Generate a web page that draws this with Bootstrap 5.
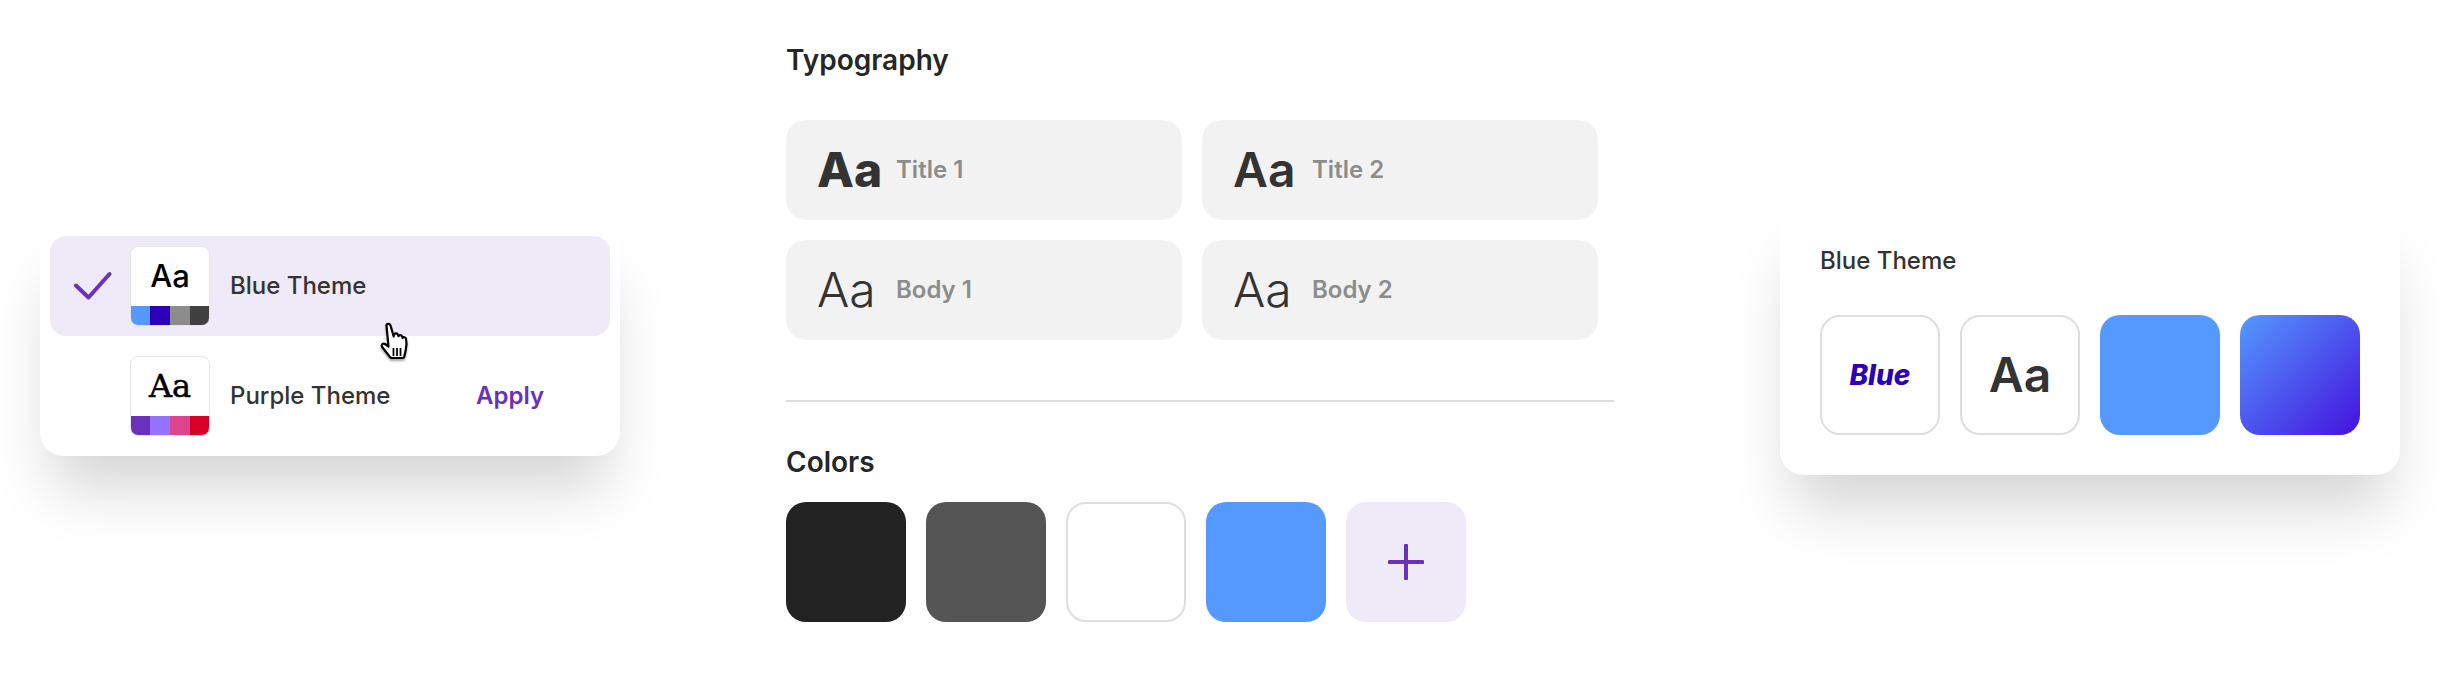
<!DOCTYPE html>
<html lang="en">
<head>
<meta charset="utf-8">
<title>Themes</title>
<link href="https://cdn.jsdelivr.net/npm/bootstrap@5.3.0/dist/css/bootstrap.min.css" rel="stylesheet">
<style>
html,body{height:682px;overflow:hidden;background:#fff}
body{font-family:"Inter","Liberation Sans",sans-serif;color:#333}
.stage{height:682px;padding:0 40px}
.float-card{background:#fff;border-radius:24px;box-shadow:0 44px 60px -12px rgba(0,0,0,.17)}
.picker{width:580px;height:230px;padding:10px}
.pick-row{height:100px;border-radius:16px;padding-left:24px;position:relative}
.pick-row.on{background:#eeeaf8}
.pick-row+.pick-row{height:110px;padding-top:10px}
.check-slot{width:56px;flex:none}
.thumb{width:80px;height:80px;flex:none;border-radius:8px;overflow:hidden;background:#fff;border:1px solid #e6e6e6;display:flex;flex-direction:column}
.thumb-aa{flex:1;display:flex;align-items:center;justify-content:center;font-size:31px;line-height:1;color:#000;font-weight:500;padding-bottom:2px}
.thumb-aa.serif{font-family:"DejaVu Serif","Liberation Serif",serif;font-weight:400;font-size:32px;-webkit-text-stroke:.5px #000}
.strip{height:20px;margin:0 -1px -1px;display:flex;flex:none}
.strip i{flex:1}
.pick-name{font-size:24px;font-weight:550;margin-left:20px;color:#333;line-height:30px}
.apply{font-size:24px;font-weight:600;color:#6931bc;line-height:30px;margin-left:auto;margin-right:66px}
.hand{position:absolute;left:329px;top:86px}
.mid{width:828px;height:682px;padding-top:45px}
.sec-title{font-size:28px;font-weight:600;line-height:30px;color:#262626}
.type-grid{display:grid;grid-template-columns:396px 396px;gap:20px;margin-top:45px}
.type-tile{height:100px;background:#f2f2f2;border-radius:20px;padding-left:31px}
.type-aa{font-size:48px;line-height:1;color:#333;width:79px;flex:none}
.w8{font-weight:800}.w6{font-weight:600}.w3{font-weight:300}
.type-lab{font-size:24px;font-weight:600;color:#8c8c8c;line-height:30px}
.rule{height:2px;background:#dedede;margin:60px 0 45px;opacity:1;border:0}
.swatches{gap:20px;margin-top:25px}
.swatch{width:120px;height:120px;border-radius:20px;flex:none}
.s-dark{background:#222}.s-grey{background:#555}.s-white{background:#fff;border:2px solid #dedede}.s-blue{background:#5599ff}.s-add{background:#eeeaf8}
.theme{width:620px;height:268px;padding:39px 40px 40px}
.theme-title{font-size:24px;font-weight:550;line-height:30px;margin-bottom:39px;color:#333}
.tile-row{gap:20px}
.tile-aa{font-size:48px;font-weight:600;color:#333}
.tile-blue{font-size:28px;font-weight:800;font-style:italic;color:#2b00b8}
.s-grad{background:linear-gradient(135deg,#5599ff,#4411dd)}
</style>
</head>
<body>
<main class="stage d-flex justify-content-between align-items-center">
  <section class="float-card picker">
    <div class="pick-row on d-flex align-items-center">
      <div class="check-slot">
        <svg width="38" height="30" viewBox="0 0 38 30" fill="none"><path d="M2 14.5 14.5 26.5 35.5 3" stroke="#6931bc" stroke-width="4" stroke-linecap="round" stroke-linejoin="round"/></svg>
      </div>
      <div class="thumb">
        <div class="thumb-aa">Aa</div>
        <div class="strip"><i style="background:#5599ff"></i><i style="background:#2b00b8"></i><i style="background:#8c8c8c"></i><i style="background:#404040"></i></div>
      </div>
      <div class="pick-name">Blue Theme</div>
      <svg class="hand" width="34" height="42" viewBox="0 0 34 42">
        <defs><filter id="hs" x="-30%" y="-30%" width="160%" height="160%"><feDropShadow dx="0" dy="2" stdDeviation="1.2" flood-color="#000" flood-opacity=".35"/></filter></defs>
        <path filter="url(#hs)" d="M7.5 3.5c0-2 3.3-2.4 4 0l3.2 11 .6-2c.5-1.7 3-1.6 3.600.2l.6 1.500c.5-1.500 3-1.500 3.600.2l.5 1.600c.7-1.300 3-1 3.400.8.8 3.500.6 7.600-.3 11.200l-1.400 6.500c-.2 1-1 1.500-2 1.500H13c-.9 0-1.600-.4-2.100-1.100L3 24.800c-1.300-2 1-4 3-2.800l3.500 2.500z" fill="#fff" stroke="#000" stroke-width="2.200" stroke-linejoin="round"/>
        <path d="M14.500 26v8M18 26v8M21.500 26v8" stroke="#000" stroke-width="1.800" fill="none"/>
      </svg>
    </div>
    <div class="pick-row d-flex align-items-center">
      <div class="check-slot"></div>
      <div class="thumb">
        <div class="thumb-aa serif">Aa</div>
        <div class="strip"><i style="background:#6931bc"></i><i style="background:#9673ff"></i><i style="background:#dd448c"></i><i style="background:#d80027"></i></div>
      </div>
      <div class="pick-name">Purple Theme</div>
      <div class="apply">Apply</div>
    </div>
  </section>

  <section class="mid">
    <div class="sec-title">Typography</div>
    <div class="type-grid">
      <div class="type-tile d-flex align-items-center"><span class="type-aa w8">Aa</span><span class="type-lab">Title 1</span></div>
      <div class="type-tile d-flex align-items-center"><span class="type-aa w6">Aa</span><span class="type-lab">Title 2</span></div>
      <div class="type-tile d-flex align-items-center"><span class="type-aa w3">Aa</span><span class="type-lab">Body 1</span></div>
      <div class="type-tile d-flex align-items-center"><span class="type-aa w3">Aa</span><span class="type-lab">Body 2</span></div>
    </div>
    <hr class="rule">
    <div class="sec-title">Colors</div>
    <div class="d-flex swatches">
      <div class="swatch s-dark"></div>
      <div class="swatch s-grey"></div>
      <div class="swatch s-white"></div>
      <div class="swatch s-blue"></div>
      <div class="swatch s-add d-flex align-items-center justify-content-center">
        <svg width="36" height="36" viewBox="0 0 36 36"><path d="M18 1.500v33M1.500 18h33" stroke="#6931bc" stroke-width="4" stroke-linecap="round"/></svg>
      </div>
    </div>
  </section>

  <section class="float-card theme">
    <div class="theme-title">Blue Theme</div>
    <div class="d-flex tile-row">
      <div class="swatch s-white d-flex align-items-center justify-content-center tile-blue">Blue</div>
      <div class="swatch s-white d-flex align-items-center justify-content-center tile-aa">Aa</div>
      <div class="swatch s-blue"></div>
      <div class="swatch s-grad"></div>
    </div>
  </section>
</main>
<script src="https://cdn.jsdelivr.net/npm/bootstrap@5.3.0/dist/js/bootstrap.bundle.min.js"></script>
</body>
</html>
